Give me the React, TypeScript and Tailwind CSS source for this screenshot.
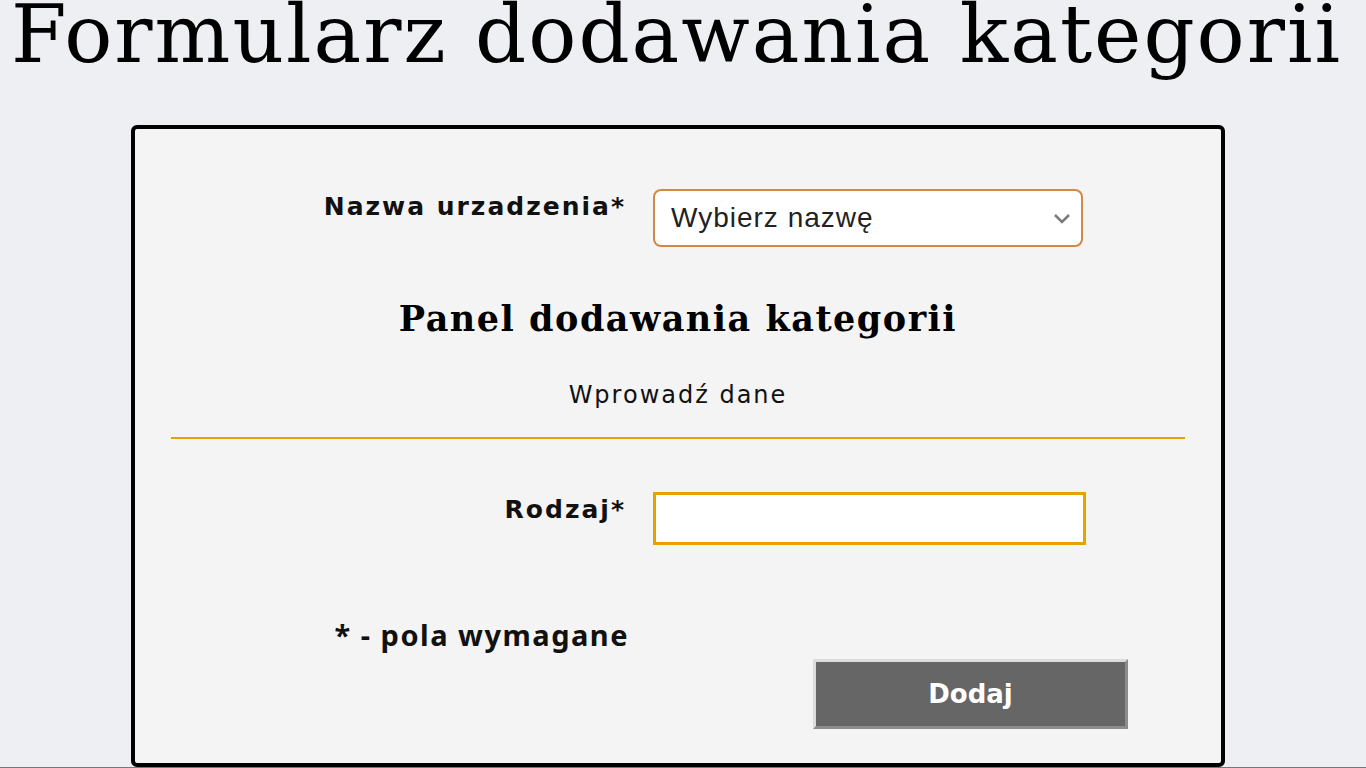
import React from 'react';

const labelCls =
  "text-right font-['DejaVu_Sans',sans-serif] font-bold text-[25px] leading-none tracking-[2px] text-[#111]";

export default function App() {
  return (
    <div className="h-[768px] overflow-hidden bg-[#eeeff3] flex flex-col">
      <h1 className="pl-[11px] font-['DejaVu_Serif',serif] text-[80px] leading-[70px] tracking-[2px] text-black whitespace-nowrap">
        Formularz dodawania kategorii
      </h1>

      <div className="mt-[55px] ml-[131px] w-[1094px] rounded-md border-4 border-black bg-[#f4f4f4] pt-[60px] pb-[34px]">
        {/* nazwa */}
        <div className="flex items-start">
          <label className={`w-[491px] mt-[5px] ${labelCls}`}>Nazwa urzadzenia*</label>
          <div className="relative ml-[27px] w-[430px]">
            <select
              defaultValue=""
              className="h-[58px] w-full appearance-none rounded-[8px] border-2 border-[#d08a45] bg-white pl-4 pr-10 font-['Liberation_Sans',sans-serif] text-[28px] tracking-[1px] text-[#222] outline-none"
            >
              <option value="">Wybierz nazwę</option>
            </select>
            <svg
              className="pointer-events-none absolute right-[12px] top-[24px]"
              width="18"
              height="11"
              viewBox="0 0 18 11"
              fill="none"
            >
              <path d="M2 2l7 7 7-7" stroke="#7a7a7a" strokeWidth="2.5" />
            </svg>
          </div>
        </div>

        <h2 className="mt-[54px] text-center font-['DejaVu_Serif',serif] font-bold text-[35px] leading-none tracking-[1.5px] text-black">
          Panel dodawania kategorii
        </h2>
        <p className="mt-[47px] text-center font-['DejaVu_Sans',sans-serif] text-[24px] leading-none tracking-[2px] text-[#111]">
          Wprowadź dane
        </p>

        <div className="mt-[30px] mx-[36px] h-[2px] bg-[#e3a20c]" />

        {/* rodzaj */}
        <div className="mt-[53px] flex items-start">
          <label className={`w-[491px] mt-[5px] ${labelCls}`}>Rodzaj*</label>
          <input
            type="text"
            className="ml-[27px] h-[53px] w-[433px] border-[3px] border-[#e6a200] bg-white px-2 text-[24px] outline-none"
          />
        </div>

        <div className="mt-[75px] flex">
          <p className="w-[494px] text-right font-['Noto_Sans',sans-serif] font-bold text-[29px] leading-none tracking-[1.5px] text-[#111]">
            * - pola wymagane
          </p>
        </div>

        <div className="mt-[10px] flex pl-[678px]">
          <button className="h-[70px] w-[315px] border-[3px] border-t-[#dcdcdc] border-l-[#dcdcdc] border-b-[#8c8c8c] border-r-[#8c8c8c] bg-[#666666] font-['DejaVu_Sans',sans-serif] font-bold text-[26px] text-white">
            Dodaj
          </button>
        </div>
      </div>

      <div className="h-[2px] bg-[#777777]" />
    </div>
  );
}
